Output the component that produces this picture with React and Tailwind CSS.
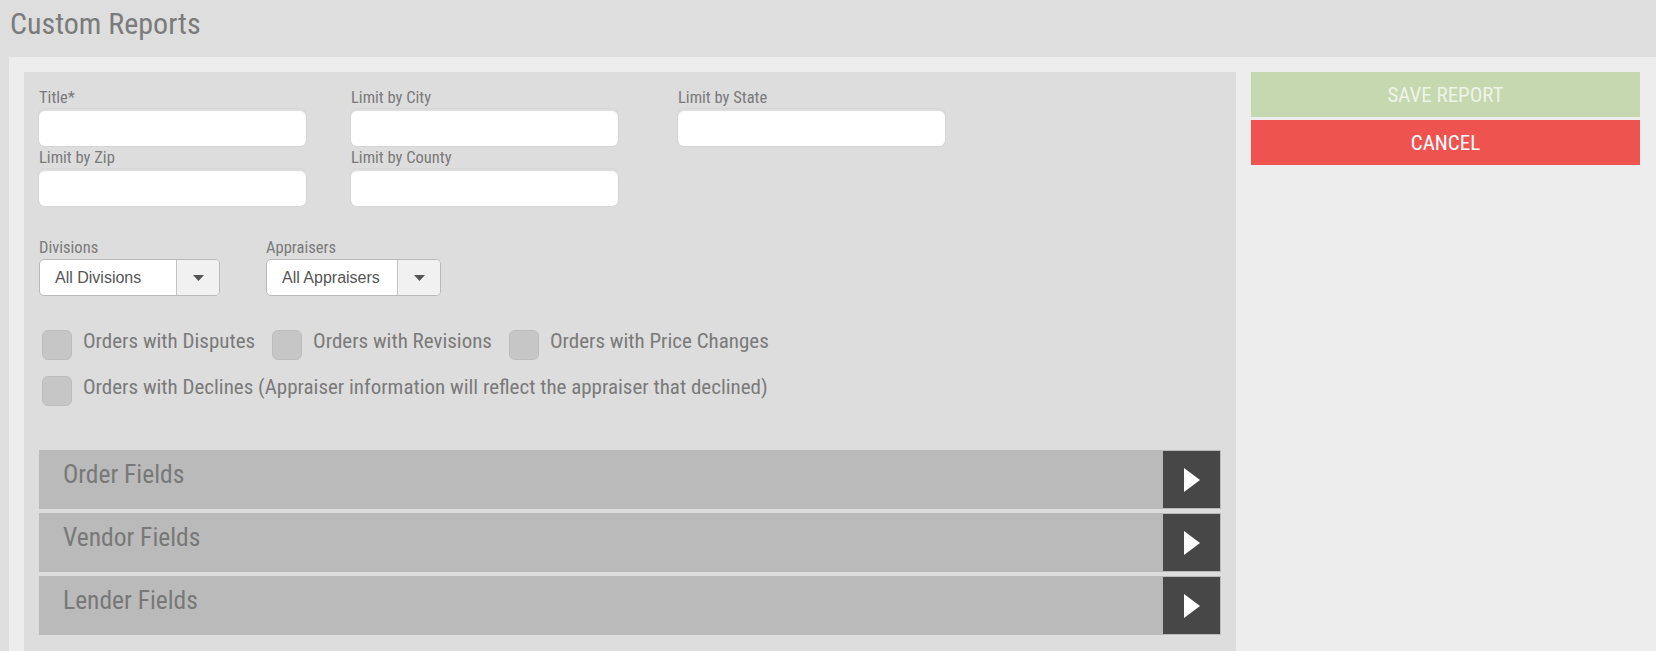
import React from 'react';

const condensed = "font-['Roboto_Condensed','Liberation_Sans_Narrow','DejaVu_Sans_Condensed',Roboto,sans-serif]";

const TextField = ({ label, className = '' }) => (
  <div className={className}>
    <div className="h-[23px] text-[16.5px] leading-[23px] text-[#7a7a7a]">{label}</div>
    <input
      type="text"
      className="block h-[37px] w-[267px] rounded-md bg-white shadow-[inset_0_2px_1px_rgba(0,0,0,0.14),0_0_0_1px_rgba(0,0,0,0.03)] outline-none"
    />
  </div>
);

const SelectBox = ({ label, value, width, textWidth, className = '' }) => (
  <div className={className}>
    <div className="h-[23px] text-[16.5px] leading-[23px] text-[#7a7a7a]">{label}</div>
    <div className={`flex h-[37px] overflow-hidden rounded-[5px] border border-[#b9b9b9] bg-white ${width}`}>
      <div className={`flex items-center pl-[15px] font-['Liberation_Sans',Arial,sans-serif] text-[16px] text-[#555] ${textWidth}`}>
        {value}
      </div>
      <div className="flex flex-1 items-center justify-center border-l border-[#c4c4c4] bg-[#f1f1f1]">
        <svg width="11" height="6" viewBox="0 0 11 6">
          <polygon points="0,0 11,0 5.5,6" fill="#555" />
        </svg>
      </div>
    </div>
  </div>
);

const Check = ({ label, className = '' }) => (
  <label className={`flex h-[30px] items-start ${className}`}>
    <span className="h-[30px] w-[30px] shrink-0 rounded-[6px] border border-[#bdbdbd] bg-[#c6c6c6]" />
    <span className="ml-[11px] text-[21px] leading-[22px] text-[#7a7a7a]">{label}</span>
  </label>
);

const Section = ({ title }) => (
  <div className="flex h-[59px] items-stretch bg-[#bababa] p-[1px]">
    <div className="flex-1 pl-[23px] pt-[7px] text-[25.5px] leading-[32px] text-[#787878]">{title}</div>
    <div className="flex w-[57px] items-center justify-center bg-[#474747]">
      <svg width="16" height="24" viewBox="0 0 16 24">
        <polygon points="0,0 16,12 0,24" fill="#fff" />
      </svg>
    </div>
  </div>
);

export default function App() {
  return (
    <div className={`h-[651px] w-full overflow-hidden bg-[#dedede] ${condensed}`}>
      {/* Header */}
      <div className="h-[57px] pl-[10px] pt-[6px]">
        <h1 className="text-[30px] leading-[36px] text-[#7b7b7b]">Custom Reports</h1>
      </div>

      <div className="ml-[9px] flex h-[594px] gap-[15px] bg-[#ededed] pl-[15px] pr-[16px] pt-[15px]">
        {/* Form panel */}
        <div className="flex-1 bg-[#dddddd] px-[15px] pt-[14px]">
          <div className="flex">
            <TextField label="Title*" className="w-[312px]" />
            <TextField label="Limit by City" className="w-[327px]" />
            <TextField label="Limit by State" />
          </div>
          <div className="flex">
            <TextField label="Limit by Zip" className="w-[312px]" />
            <TextField label="Limit by County" />
          </div>

          <div className="mt-[30px] flex gap-[46px]">
            <SelectBox label="Divisions" value="All Divisions" width="w-[181px]" textWidth="w-[136px]" />
            <SelectBox label="Appraisers" value="All Appraisers" width="w-[175px]" textWidth="w-[130px]" />
          </div>

          <div className="ml-[3px] mt-[34px] flex">
            <Check label="Orders with Disputes" />
            <Check label="Orders with Revisions" className="ml-[17px]" />
            <Check label="Orders with Price Changes" className="ml-[17px]" />
          </div>
          <div className="ml-[3px] mt-[16px] flex">
            <Check label="Orders with Declines (Appraiser information will reflect the appraiser that declined)" />
          </div>

          <div className="mt-[44px] flex flex-col gap-[4px]">
            <Section title="Order Fields" />
            <Section title="Vendor Fields" />
            <Section title="Lender Fields" />
          </div>
        </div>

        {/* Actions */}
        <div className="flex w-[389px] flex-col gap-[3px]">
          <button className="h-[45px] w-full bg-[#c5d8b0] pt-[2px] text-[21px] text-[#eef4e6]">SAVE REPORT</button>
          <button className="h-[45px] w-full bg-[#ef5350] pt-[2px] text-[21px] text-white">CANCEL</button>
        </div>
      </div>
    </div>
  );
}
